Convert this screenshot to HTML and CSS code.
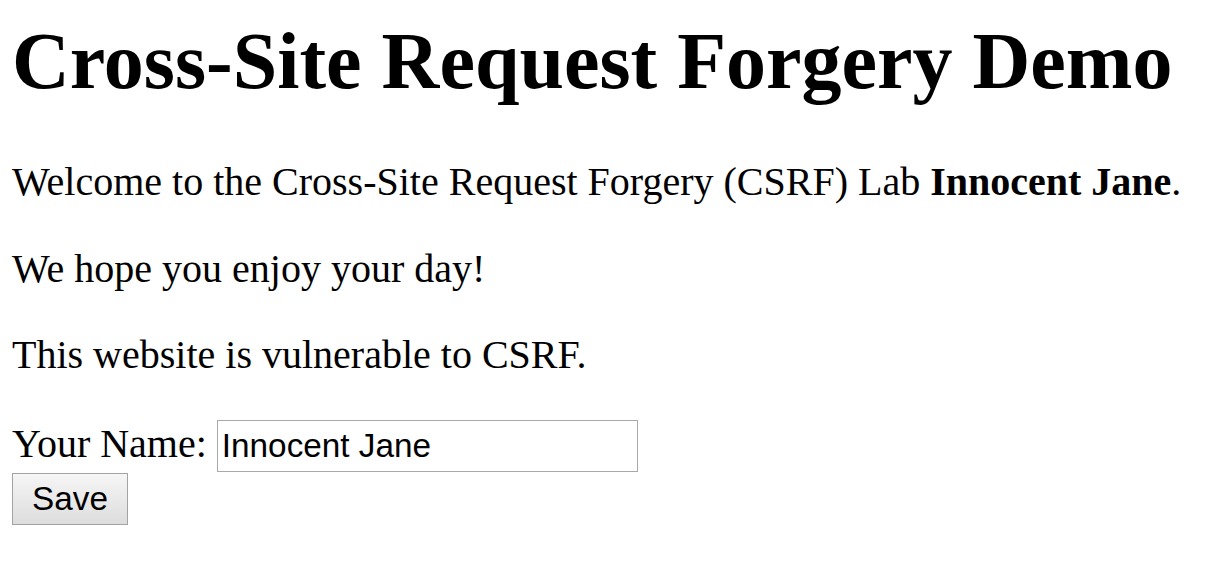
FILE: index.html
```html
<!DOCTYPE html>
<html>
<head>
<meta charset="utf-8">
<title>Cross-Site Request Forgery Demo</title>
<link rel="stylesheet" href="styles.css">
</head>
<body>
<div class="page">
  <h1 class="title">Cross-Site Request Forgery Demo</h1>
  <p class="text">Welcome to the Cross-Site Request Forgery (CSRF) Lab <b>Innocent Jane</b>.</p>
  <p class="text">We hope you enjoy your day!</p>
  <p class="text">This website is vulnerable to CSRF.</p>
  <form class="form">
    <div class="row">
      <label class="label" for="name">Your Name:</label>
      <input class="field" id="name" type="text" value="Innocent Jane">
    </div>
    <div class="row2">
      <button class="btn" type="button">Save</button>
    </div>
  </form>
</div>
</body>
</html>
```
FILE: styles.css
```css
html, body {
  margin: 0;
  padding: 0;
  background: #fff;
}
.page {
  padding: 15px 12px 0 12px;
  font-family: "Liberation Serif", "Times New Roman", serif;
  color: #000;
}
.title {
  font-size: 80px;
  line-height: 92px;
  font-weight: bold;
  margin: 0 0 52px 0;
}
.text {
  font-size: 40px;
  line-height: 46px;
  margin: 0 0 40.5px 0;
}
.form {
  margin: 0;
  padding-top: 1.5px;
}
.row {
  display: flex;
  align-items: baseline;
  gap: 10px;
}
.label {
  font-size: 40px;
  line-height: 46px;
}
.field {
  box-sizing: border-box;
  width: 421px;
  height: 52px;
  margin: 0;
  padding: 0 4px;
  border: 1px solid #a9a9a9;
  font-family: "Liberation Sans", Arial, sans-serif;
  font-size: 33.3px;
  color: #000;
  background: #fff;
  outline: none;
}
.row2 {
  margin-top: 1px;
  display: flex;
}
.btn {
  box-sizing: border-box;
  width: 116px;
  height: 52px;
  margin: 0;
  padding: 0;
  border: 1px solid #a3a3a3;
  border-radius: 0;
  background: linear-gradient(#f6f6f6, #dddddd);
  font-family: "Liberation Sans", Arial, sans-serif;
  font-size: 33.3px;
  color: #000;
}
```
